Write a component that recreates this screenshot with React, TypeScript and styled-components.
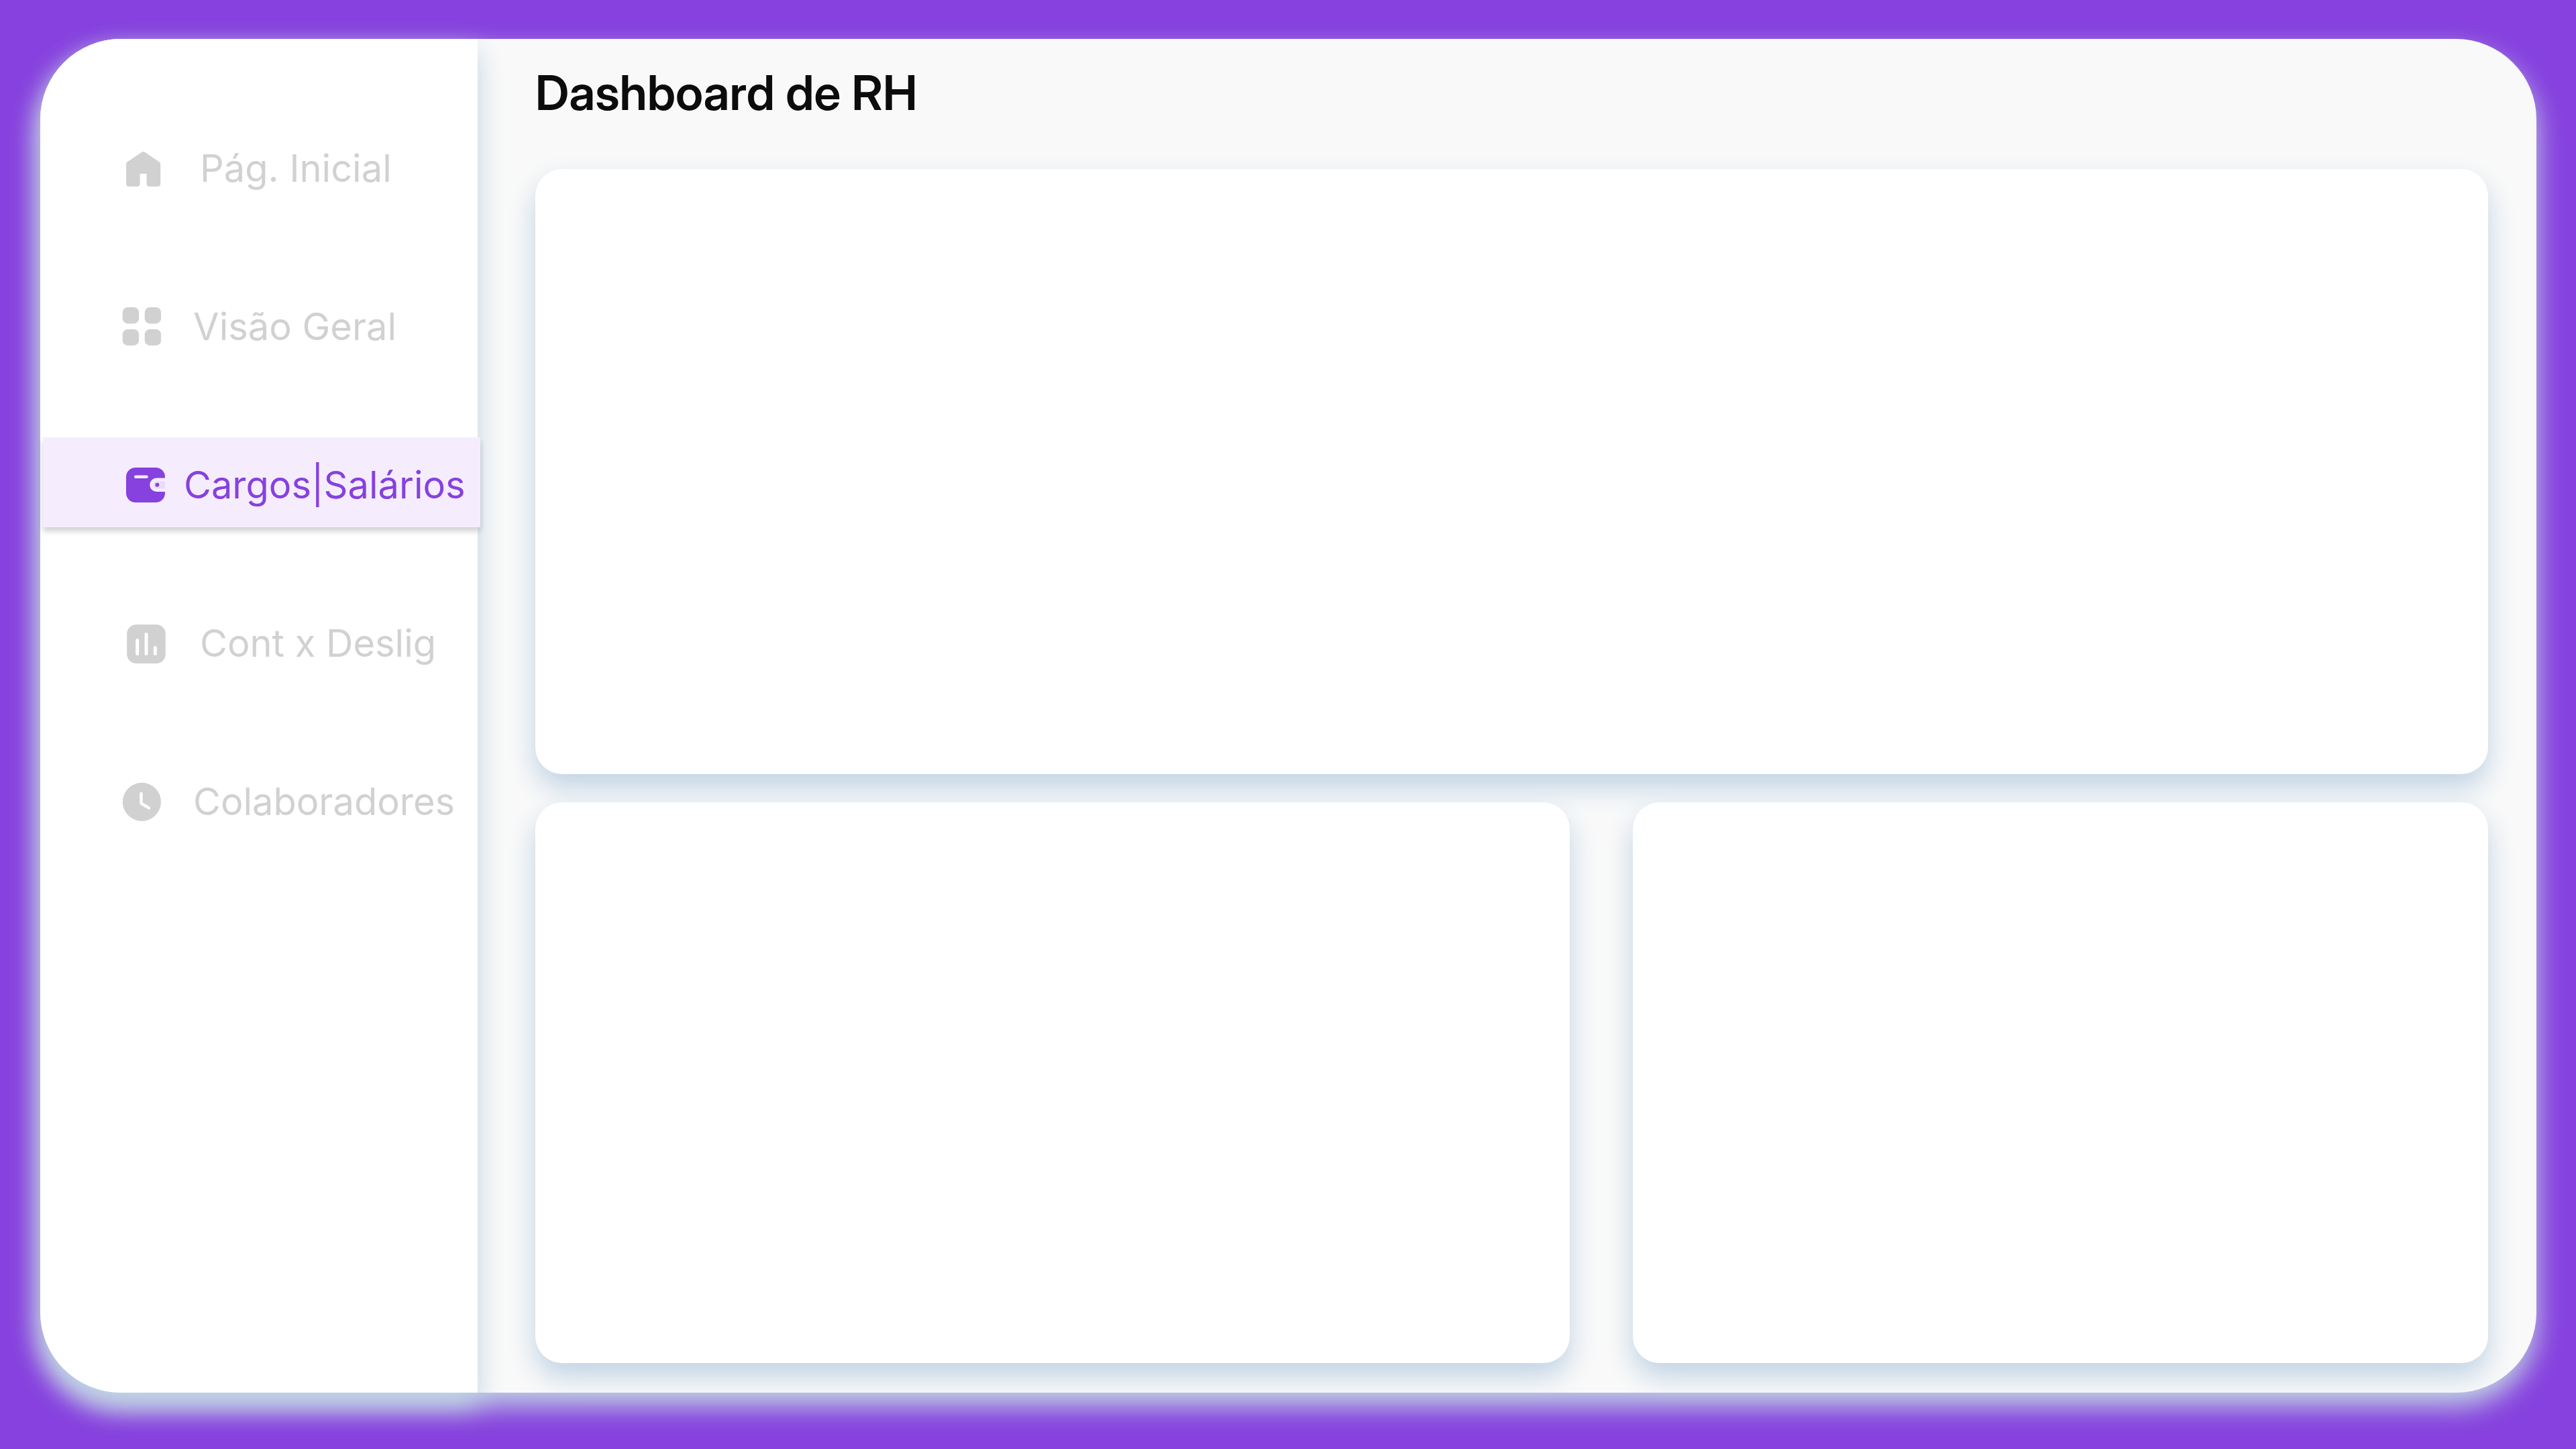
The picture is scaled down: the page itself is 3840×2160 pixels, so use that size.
import React from "react";
import styled, { createGlobalStyle, ThemeProvider } from "styled-components";

const theme = {
  purple: "#8641de",
  lilac: "#f5edfe",
  muted: "#d1d1d1",
  ink: "#0c0c0c",
  surface: "#ffffff",
  canvas: "#f9f9f9",
  shadow: "0 20px 40px #c0d3e4",
  font: 'Inter, "Liberation Sans", sans-serif',
};

const GlobalStyle = createGlobalStyle`
  *, *::before, *::after { box-sizing: border-box; }
  body { margin: 0; background: ${theme.purple}; }
`;

const Page = styled.div`
  display: flex;
  min-height: 100vh;
  padding: 58px 59px 84px 60px;
  background: ${(p) => p.theme.purple};
  font-family: ${(p) => p.theme.font};
`;

const Shell = styled.div`
  display: flex;
  flex: 1;
  border-radius: 120px;
  background: ${(p) => p.theme.canvas};
  box-shadow: ${(p) => p.theme.shadow};
`;

const Sidebar = styled.aside`
  flex: 0 0 652px;
  padding-top: 122px;
  border-radius: 120px 0 0 120px;
  background: ${(p) => p.theme.surface};
  box-shadow: ${(p) => p.theme.shadow};
`;

const NavList = styled.ul`
  display: flex;
  flex-direction: column;
  gap: 102px;
  margin: 0 -4px 0 4px;
  padding: 0;
  list-style: none;
`;

const NavLink = styled.a<{ $active?: boolean; $gap: number }>`
  display: flex;
  align-items: center;
  gap: ${(p) => p.$gap}px;
  height: 134px;
  padding: 8px 0 0 114px;
  color: ${(p) => (p.$active ? p.theme.purple : p.theme.muted)};
  background: ${(p) => (p.$active ? p.theme.lilac : "transparent")};
  box-shadow: ${(p) => (p.$active ? "0 6px 8px rgba(0, 0, 0, 0.18)" : "none")};
  font-size: 56px;
  font-weight: 400;
  line-height: 68px;
  text-decoration: none;
  white-space: nowrap;
`;

const Icon = styled.svg`
  flex: none;
  width: 72px;
  height: 72px;
  fill: currentColor;
`;

const Main = styled.main`
  display: flex;
  flex: 1;
  flex-direction: column;
  min-width: 0;
  padding: 40px 72px 44px 86px;
`;

const Title = styled.h1`
  margin: 0 0 74px;
  color: ${(p) => p.theme.ink};
  font-family: "Inter Display", Inter, sans-serif;
  font-size: 72px;
  font-weight: 600;
  line-height: 80px;
`;

const Board = styled.div`
  display: grid;
  flex: 1;
  grid-template-columns: 1542fr 1275fr;
  grid-template-rows: 902fr 836fr;
  gap: 42px 94px;
`;

const Card = styled.section<{ $wide?: boolean }>`
  grid-column: ${(p) => (p.$wide ? "1 / -1" : "auto")};
  border-radius: 40px;
  background: ${(p) => p.theme.surface};
  box-shadow: ${(p) => p.theme.shadow};
`;

const HomeIcon = () => (
  <Icon viewBox="0 0 72 72" aria-hidden="true">
    <path d="M33.4 11.8a3.6 3.6 0 0 1 4.4 0L59.6 26.4a3.6 3.6 0 0 1 1.6 3V59a4 4 0 0 1-4 4H44.6a4 4 0 0 1-4-4V45a1 1 0 0 0-1-1h-8a1 1 0 0 0-1 1v14a4 4 0 0 1-4 4H14a4 4 0 0 1-4-4V29.4a3.6 3.6 0 0 1 1.6-3z" />
  </Icon>
);

const GridIcon = () => (
  <Icon viewBox="0 0 72 72" aria-hidden="true">
    <rect x="4.7" y="7" width="24.4" height="24.4" rx="8" />
    <rect x="37.7" y="7" width="24.4" height="24.4" rx="8" />
    <rect x="4.7" y="39.7" width="24.4" height="24.4" rx="8" />
    <rect x="37.7" y="39.7" width="24.4" height="24.4" rx="8" />
  </Icon>
);

const WalletIcon = () => (
  <Icon viewBox="0 0 72 72" aria-hidden="true">
    <path d="M24 10h30a14 14 0 0 1 14 14v1.5H55.5a10.25 10.25 0 0 0 0 20.5H68V48a14 14 0 0 1-14 14H24a14 14 0 0 1-14-14V24a14 14 0 0 1 14-14z" />
    <path d="M68 30.2H56.5a5.7 5.7 0 0 0 0 11.4H68z" opacity="0.1" />
    <circle cx="56.4" cy="35.8" r="3" />
    <path d="M24.2 23.7h16.3" stroke="#f5edfe" strokeWidth="4.6" strokeLinecap="round" />
  </Icon>
);

const ChartIcon = () => (
  <Icon viewBox="0 0 72 72" aria-hidden="true">
    <rect x="11.2" y="8" width="57.6" height="58" rx="14" />
    <path
      d="M26.7 31.5V51.5M40 22.5V51.5M53.3 42.5V51.5"
      stroke="#ffffff"
      strokeWidth="5"
      strokeLinecap="round"
    />
  </Icon>
);

const ClockIcon = () => (
  <Icon viewBox="0 0 72 72" aria-hidden="true">
    <circle cx="33.4" cy="36.4" r="28.6" />
    <path
      d="M32.5 24V38.7L44 45.4"
      fill="none"
      stroke="#ffffff"
      strokeWidth="4.4"
      strokeLinecap="round"
      strokeLinejoin="round"
    />
  </Icon>
);

const items = [
  { label: "Pág. Inicial", icon: HomeIcon, gap: 48 },
  { label: "Visão Geral", icon: GridIcon, gap: 38 },
  { label: "Cargos|Salários", icon: WalletIcon, gap: 24, active: true },
  { label: "Cont x Deslig", icon: ChartIcon, gap: 48 },
  { label: "Colaboradores", icon: ClockIcon, gap: 38 },
];

export default function App() {
  return (
    <ThemeProvider theme={theme}>
      <GlobalStyle />
      <Page>
        <Shell>
          <Sidebar>
            <nav>
              <NavList>
                {items.map(({ label, icon: Glyph, gap, active }) => (
                  <li key={label}>
                    <NavLink
                      href="#"
                      $gap={gap}
                      $active={active}
                      aria-current={active ? "page" : undefined}
                    >
                      <Glyph />
                      {label}
                    </NavLink>
                  </li>
                ))}
              </NavList>
            </nav>
          </Sidebar>
          <Main>
            <Title>Dashboard de RH</Title>
            <Board>
              <Card $wide />
              <Card />
              <Card />
            </Board>
          </Main>
        </Shell>
      </Page>
    </ThemeProvider>
  );
}
